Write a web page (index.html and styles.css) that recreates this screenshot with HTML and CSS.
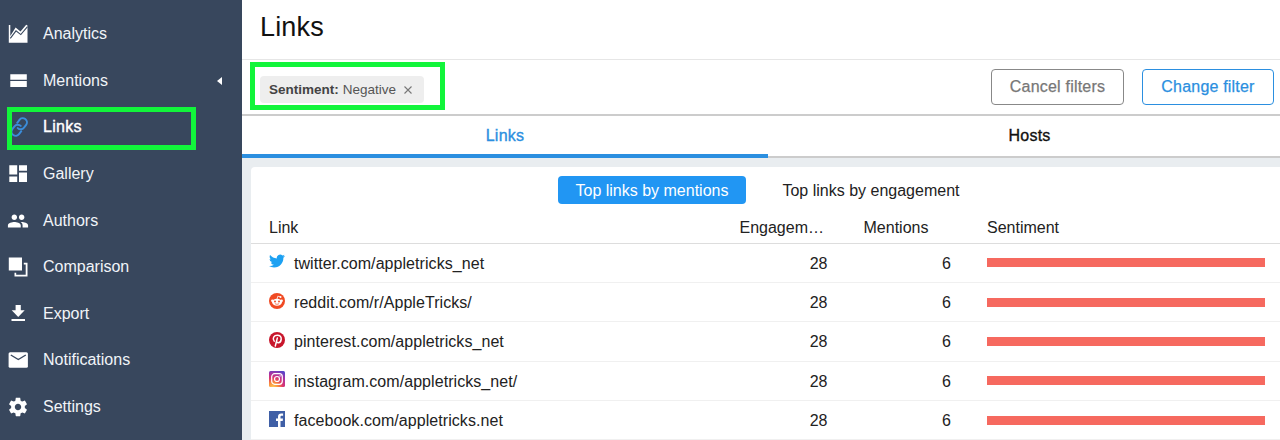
FILE: index.html
```html
<!DOCTYPE html>
<html lang="en">
<head>
    <meta charset="UTF-8">
    <meta name="viewport" content="width=device-width, initial-scale=1.0">
    <title>Links</title>
    <link rel="stylesheet" href="styles.css">
</head>
<body>
    <nav class="sidebar">
        <a class="nav_item">
            <svg class="nav_icon" viewBox="0 0 20 20"><path d="M.8 1h1.500v11L7.600 3.600l4.900 3.800L18.200.8l1.300.7v17.200H.8z" fill="#fff"/><path d="M2.300 14.300L8 6.800l4.800 3.800 6.700-7.900" fill="none" stroke="#38475d" stroke-width="1.100"/></svg>
            <span>Analytics</span>
        </a>
        <a class="nav_item">
            <svg class="nav_icon" viewBox="0 0 20 20"><path d="M2.300 3.300h16.500v5.500H2.300zM2.300 10.100h16.500v6H2.300z" fill="#fff"/></svg>
            <span>Mentions</span>
            <i class="arrow"></i>
        </a>
        <a class="nav_item active">
            <svg class="nav_icon" viewBox="0 0 24 24"><g transform="translate(1.500 0) rotate(-8 12 12)" fill="none" stroke="#3b8ddb" stroke-width="2.300" stroke-linecap="round"><path d="M10 13a5 5 0 0 0 7.540.540l3-3a5 5 0 0 0-7.070-7.070l-3.200 3.200"/><path d="M14 11a5 5 0 0 0-7.540-.54l-3 3a5 5 0 0 0 7.070 7.070l3.200-3.200"/></g></svg>
            <span>Links</span>
        </a>
        <a class="nav_item">
            <svg class="nav_icon" viewBox="0 0 20 20"><path d="M1.300 1.200h7.900v9.400H1.300zM11 1.200h8v5.600h-8zM1.300 12.500h7.900V18H1.300zM11 8.500h8V18h-8z" fill="#fff"/></svg>
            <span>Gallery</span>
        </a>
        <a class="nav_item">
            <svg class="nav_icon wide" viewBox="0 0 24 24"><path d="M16 11c1.660 0 2.990-1.340 2.990-3S17.660 5 16 5s-3 1.340-3 3 1.340 3 3 3zm-8 0c1.660 0 2.990-1.340 2.990-3S9.660 5 8 5 5 6.340 5 8s1.340 3 3 3zm0 2c-2.330 0-7 1.170-7 3.500V19h14v-2.500c0-2.330-4.670-3.500-7-3.500zm8 0c-.29 0-.62.020-.97.050 1.160.84 1.970 1.970 1.970 3.450V19h6v-2.500c0-2.330-4.670-3.500-7-3.500z" fill="#fff"/></svg>
            <span>Authors</span>
        </a>
        <a class="nav_item">
            <svg class="nav_icon" viewBox="0 0 20 20"><path d="M.8.600h13.200v12.800H.8zM15.800 5.800h3.700v13.700H6.500v-3.800h1.700v2h9.500V7.600h-1.900z" fill="#fff"/></svg>
            <span>Comparison</span>
        </a>
        <a class="nav_item">
            <svg class="nav_icon" viewBox="0 0 20 20"><path d="M7.600.900h5.200v5.300h3.900l-6.500 6.700-6.500-6.700h3.900zM3.500 15H17v1.900H3.500z" fill="#fff"/></svg>
            <span>Export</span>
        </a>
        <a class="nav_item">
            <svg class="nav_icon" viewBox="0 0 20 20"><rect x=".6" y="2.200" width="19.300" height="15.500" rx="1.500" fill="#fff"/><path d="M2.800 5l7.500 4.500L17.800 5" fill="none" stroke="#38475d" stroke-width="1.400"/></svg>
            <span>Notifications</span>
        </a>
        <a class="nav_item">
            <svg class="nav_icon gear" viewBox="0 0 24 24"><path d="M19.430 12.980c.04-.32.070-.64.070-.98s-.03-.66-.07-.98l2.110-1.650c.19-.15.240-.42.120-.64l-2-3.460c-.12-.22-.39-.3-.61-.22l-2.490 1c-.52-.4-1.080-.73-1.690-.98l-.38-2.650C14.460 2.180 14.250 2 14 2h-4c-.25 0-.46.180-.49.420l-.38 2.650c-.61.250-1.170.59-1.690.98l-2.490-1c-.23-.09-.49 0-.61.220l-2 3.460c-.13.220-.07.490.12.640l2.110 1.650c-.04.320-.07.650-.07.980s.03.660.070.980l-2.110 1.650c-.19.150-.24.420-.12.640l2 3.460c.12.220.39.300.61.220l2.490-1c.52.400 1.080.73 1.690.98l.38 2.650c.03.240.24.420.49.420h4c.25 0 .46-.18.490-.42l.38-2.650c.61-.25 1.170-.59 1.690-.98l2.490 1c.23.090.49 0 .61-.22l2-3.460c.12-.22.070-.49-.12-.64l-2.110-1.650zM12 15.500c-1.930 0-3.500-1.570-3.500-3.500s1.570-3.500 3.500-3.500 3.500 1.570 3.500 3.500-1.570 3.500-3.500 3.500z" fill="#fff"/></svg>
            <span>Settings</span>
        </a>
    </nav>

    <main class="content">
        <header class="page_header">
            <h1>Links</h1>
        </header>

        <section class="filters">
            <div class="filter_tag">
                <b>Sentiment:</b>
                <span>Negative</span>
                <svg class="remove" viewBox="0 0 8 8"><path d="M.5.500l7 7M7.500.500l-7 7" stroke="#777" stroke-width="1.100"/></svg>
            </div>
            <div class="filter_buttons">
                <button class="btn">Cancel filters</button>
                <button class="btn primary">Change filter</button>
            </div>
        </section>

        <div class="tabs">
            <a class="tab selected"><span>Links</span></a>
            <a class="tab"><span>Hosts</span></a>
        </div>

        <section class="card">
            <div class="switch">
                <a class="switch_item on"><span>Top links by mentions</span></a>
                <a class="switch_item"><span>Top links by engagement</span></a>
            </div>
            <div class="row head">
                <span>Link</span>
                <span>Engagem…</span>
                <span>Mentions</span>
                <span>Sentiment</span>
            </div>
            <div class="row">
                <div class="link">
                    <svg viewBox="0 0 24 24"><path fill="#1da1f2" d="M23.950 4.570a10 10 0 0 1-2.820.770 4.960 4.960 0 0 0 2.160-2.720 9.990 9.990 0 0 1-3.120 1.180 4.920 4.920 0 0 0-8.380 4.480C7.690 8.090 4.070 6.130 1.640 3.160a4.820 4.820 0 0 0-.67 2.480c0 1.710.87 3.210 2.190 4.100a4.900 4.900 0 0 1-2.230-.62v.060a4.920 4.920 0 0 0 3.950 4.830 5 5 0 0 1-2.210.080 4.940 4.940 0 0 0 4.600 3.420A9.870 9.870 0 0 1 0 19.540a13.990 13.990 0 0 0 7.550 2.210c9.050 0 14-7.500 14-13.980 0-.21 0-.42-.02-.63a9.940 9.940 0 0 0 2.420-2.570z"/></svg>
                    <span>twitter.com/appletricks_net</span>
                </div>
                <span class="num">28</span>
                <span class="num">6</span>
                <div class="bar"></div>
            </div>
            <div class="row">
                <div class="link">
                    <svg viewBox="0 0 16 16"><circle cx="8" cy="8" r="8" fill="#f04a23"/><path d="M8 6.200l.8-3 2.400.6" fill="none" stroke="#fff" stroke-width=".8"/><circle cx="11.500" cy="4" r="1" fill="#fff"/><circle cx="3.400" cy="7.700" r="1.300" fill="#fff"/><circle cx="12.600" cy="7.700" r="1.300" fill="#fff"/><ellipse cx="8" cy="9.300" rx="4.900" ry="3.500" fill="#fff"/><circle cx="6" cy="8.500" r=".95" fill="#f04a23"/><circle cx="10" cy="8.500" r=".95" fill="#f04a23"/><path d="M5.900 10.700q2.100 1.300 4.200 0" fill="none" stroke="#f04a23" stroke-width=".7"/></svg>
                    <span>reddit.com/r/AppleTricks/</span>
                </div>
                <span class="num">28</span>
                <span class="num">6</span>
                <div class="bar"></div>
            </div>
            <div class="row">
                <div class="link">
                    <svg viewBox="0 0 16 16"><circle cx="8" cy="8" r="8" fill="#c8162b"/><path d="M5.200 9.100C3 6.200 5 3.200 8.300 3.200c2.600 0 4.100 1.700 3.900 3.900-.2 2.400-1.700 3.700-3.100 3.600-.9 0-1.300-.6-1.400-.9M8.300 6.100L6.300 14" fill="none" stroke="#fff" stroke-width="1.500" stroke-linecap="round"/></svg>
                    <span>pinterest.com/appletricks_net</span>
                </div>
                <span class="num">28</span>
                <span class="num">6</span>
                <div class="bar"></div>
            </div>
            <div class="row">
                <div class="link">
                    <svg viewBox="0 0 16 16">
                        <defs>
                            <radialGradient id="insta" cx=".25" cy="1.050" r="1.150">
                                <stop offset="0" stop-color="#ffd25a"/>
                                <stop offset=".3" stop-color="#f98a3c"/>
                                <stop offset=".55" stop-color="#dc3470"/>
                                <stop offset=".8" stop-color="#a233a8"/>
                                <stop offset="1" stop-color="#5a45c8"/>
                            </radialGradient>
                        </defs>
                        <rect width="16" height="16" rx="1.500" fill="url(#insta)"/>
                        <g fill="none" stroke="#fff" stroke-width="1.200"><rect x="2.700" y="2.700" width="10.600" height="10.600" rx="3"/><circle cx="8" cy="8" r="2.500"/></g>
                        <circle cx="11.100" cy="4.900" r=".7" fill="#fff"/>
                    </svg>
                    <span>instagram.com/appletricks_net/</span>
                </div>
                <span class="num">28</span>
                <span class="num">6</span>
                <div class="bar"></div>
            </div>
            <div class="row">
                <div class="link">
                    <svg viewBox="0 0 16 16"><path fill="#3f5fa6" d="M0 0h16v16H0z"/><path fill="#fff" d="M9 16V10H7V7.600h2V5.800c0-2.200 1.300-3.300 3.200-3.300.9 0 1.700.1 1.900.1v2.200h-1.300c-1 0-1.300.5-1.300 1.200v1.600h2.500l-.3 2.400h-2.200v6z"/></svg>
                    <span>facebook.com/appletricks.net</span>
                </div>
                <span class="num">28</span>
                <span class="num">6</span>
                <div class="bar"></div>
            </div>
        </section>
    </main>

    <!-- callouts drawn over the page -->
    <div class="callout callout_nav"></div>
    <div class="callout callout_filter"></div>
</body>
</html>
```

FILE: styles.css
```css
* {
    margin: 0;
    padding: 0;
    box-sizing: border-box;
    font-family: "Liberation Sans", Arial, sans-serif;
}
body {
    position: relative;
    display: flex;
    width: 1280px;
    height: 440px;
    overflow: hidden;
    font-size: 16px;
    color: #222;
    background: #e9edf0;
}
.sidebar {
    flex: 0 0 242px;
    padding-top: 11px;
    background: #38475d;
}
.nav_item {
    display: flex;
    align-items: center;
    height: 46.6px;
    padding-left: 8px;
    color: #f1f4f8;
}
.nav_icon {
    width: 20px;
    height: 20px;
    margin-right: 15px;
}
.nav_icon.wide,
.nav_icon.gear {
    width: 22px;
    height: 22px;
    margin-left: -1px;
    margin-right: 14px;
}
.nav_item.active {
    color: #fff;
    letter-spacing: 0.3px;
    -webkit-text-stroke: 0.4px #fff;
}
.arrow {
    margin-left: auto;
    margin-right: 20px;
    border: 4.5px solid transparent;
    border-right: 5px solid #fff;
    border-left: 0;
}
.content {
    flex: 1;
    min-width: 0;
}
.page_header {
    height: 60px;
    padding: 12px 18px;
    background: #fff;
    border-bottom: 1px solid #e6e6e6;
}
h1 {
    font-size: 27px;
    font-weight: normal;
    line-height: 31px;
    letter-spacing: 0.15px;
    color: #111;
}
.filters {
    display: flex;
    justify-content: space-between;
    height: 56px;
    padding: 9px 6px 0 18px;
    background: #fff;
    border-bottom: 2px solid #ccc;
}
.filter_tag {
    display: flex;
    align-items: center;
    width: 164px;
    height: 27px;
    margin-top: 7px;
    padding-left: 9px;
    font-size: 13.5px;
    color: #555;
    background: #eee;
    border-radius: 4px;
}
.filter_tag b {
    margin-right: 4px;
    color: #444;
}
.remove {
    width: 8px;
    height: 8px;
    margin-left: 8px;
}
.filter_buttons {
    display: flex;
    gap: 18px;
}
.btn {
    width: 133px;
    height: 36px;
    font-size: 16px;
    letter-spacing: 0.2px;
    color: #777;
    background: #fff;
    border: 1px solid #888;
    border-radius: 4px;
    -webkit-text-stroke: 0.25px;
}
.btn.primary {
    width: 132px;
    color: #2b8fe0;
    border-color: #2b8fe0;
}
.tabs {
    display: flex;
    height: 42px;
    background: #fff;
}
.tab {
    flex: 0 0 526px;
    display: flex;
    align-items: center;
    justify-content: center;
    padding-right: 3px;
    letter-spacing: 0.25px;
    color: #111;
    border-bottom: 2px solid #ccc;
    -webkit-text-stroke: 0.35px;
}
.tab.selected {
    padding: 2px 0 0;
    color: #2b8fe0;
    border-bottom: 4px solid #2b8fe0;
}
.card {
    height: 290px;
    margin: 9px 0 0 9px;
    padding-top: 9px;
    background: #fff;
    border-radius: 4px 0 0 0;
}
.switch {
    display: flex;
    gap: 18px;
    margin-left: 306.5px;
}
.switch_item {
    height: 28px;
    padding: 0 18px;
    line-height: 29px;
    border-radius: 4px;
}
.switch_item.on {
    color: #fff;
    background: #2196f3;
}
.row {
    display: grid;
    grid-template-columns: 470.5px 124px 123.5px 278px;
    align-items: center;
    height: 39.4px;
    padding-left: 18px;
    border-bottom: 1px solid #f0f0f0;
}
.row.head {
    height: 39.5px;
    padding-top: 9px;
    border-bottom-color: #ddd;
}
.link {
    display: flex;
    align-items: center;
    padding-top: 2px;
    letter-spacing: 0.06px;
}
.link svg {
    width: 16px;
    height: 16px;
    margin: -5px 9px 0 0;
}
.num {
    padding: 2px 36px 0 0;
    text-align: right;
}
.bar {
    height: 9px;
    background: #f6695f;
}
.callout {
    position: absolute;
    border: 5px solid #12f53b;
}
.callout_nav {
    left: 7px;
    top: 107px;
    width: 189px;
    height: 43px;
}
.callout_filter {
    left: 250px;
    top: 62px;
    width: 195px;
    height: 48px;
}
```
